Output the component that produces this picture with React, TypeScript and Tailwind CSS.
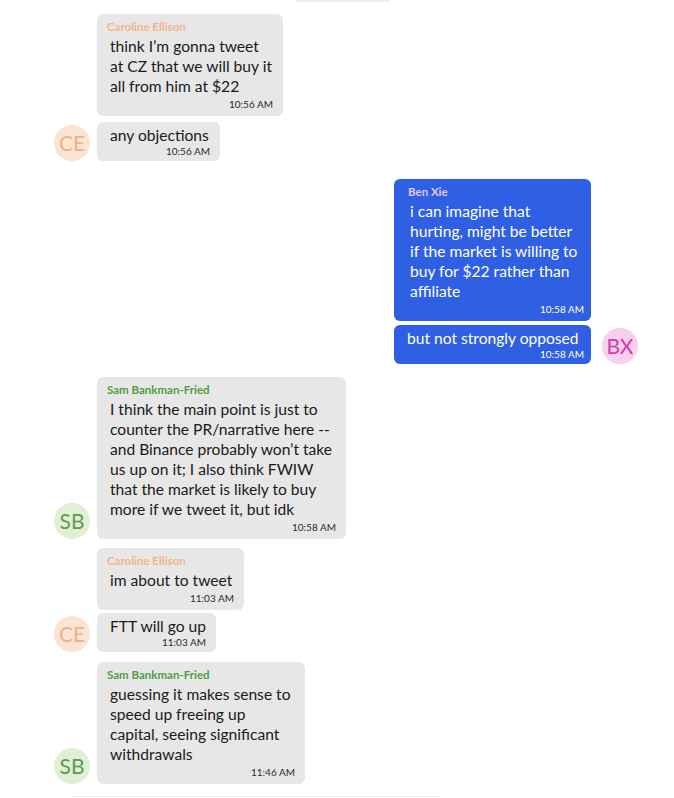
import React from 'react';

type Side = 'left' | 'right';

interface Bubble {
  name?: string;
  lines: string[];
  time: string;
  width: number;
  gapTop: number;
}

interface Group {
  side: Side;
  initials: string;
  nameColor: string;
  avatarBg: string;
  avatarText: string;
  bubbles: Bubble[];
  gapTop: number;
}

const groups: Group[] = [
  {
    side: 'left',
    initials: 'CE',
    nameColor: 'text-[#f2b48c]',
    avatarBg: 'bg-[#fbe4d3]',
    avatarText: 'text-[#efb088]',
    gapTop: 14,
    bubbles: [
      {
        name: 'Caroline Ellison',
        lines: ['think I\u2019m gonna tweet', 'at CZ that we will buy it', 'all from him at $22'],
        time: '10:56 AM',
        width: 186,
        gapTop: 0,
      },
      { lines: ['any objections'], time: '10:56 AM', width: 123, gapTop: 6 },
    ],
  },
  {
    side: 'right',
    initials: 'BX',
    nameColor: 'text-[#e6c6f2]',
    avatarBg: 'bg-[#f7d0ee]',
    avatarText: 'text-[#d43aae]',
    gapTop: 18,
    bubbles: [
      {
        name: 'Ben Xie',
        lines: [
          'i can imagine that',
          'hurting, might be better',
          'if the market is willing to',
          'buy for $22 rather than',
          'affiliate',
        ],
        time: '10:58 AM',
        width: 197,
        gapTop: 0,
      },
      { lines: ['but not strongly opposed'], time: '10:58 AM', width: 197, gapTop: 4 },
    ],
  },
  {
    side: 'left',
    initials: 'SB',
    nameColor: 'text-[#4f9e3f]',
    avatarBg: 'bg-[#dff0d6]',
    avatarText: 'text-[#5f9b4f]',
    gapTop: 13,
    bubbles: [
      {
        name: 'Sam Bankman-Fried',
        lines: [
          'I think the main point is just to',
          'counter the PR/narrative here --',
          'and Binance probably won\u2019t take',
          'us up on it; I also think FWIW',
          'that the market is likely to buy',
          'more if we tweet it, but idk',
        ],
        time: '10:58 AM',
        width: 249,
        gapTop: 0,
      },
    ],
  },
  {
    side: 'left',
    initials: 'CE',
    nameColor: 'text-[#f2b48c]',
    avatarBg: 'bg-[#fbe4d3]',
    avatarText: 'text-[#efb088]',
    gapTop: 9,
    bubbles: [
      { name: 'Caroline Ellison', lines: ['im about to tweet'], time: '11:03 AM', width: 147, gapTop: 0 },
      { lines: ['FTT will go up'], time: '11:03 AM', width: 119, gapTop: 3 },
    ],
  },
  {
    side: 'left',
    initials: 'SB',
    nameColor: 'text-[#4f9e3f]',
    avatarBg: 'bg-[#dff0d6]',
    avatarText: 'text-[#5f9b4f]',
    gapTop: 10,
    bubbles: [
      {
        name: 'Sam Bankman-Fried',
        lines: ['guessing it makes sense to', 'speed up freeing up', 'capital, seeing significant', 'withdrawals'],
        time: '11:46 AM',
        width: 208,
        gapTop: 0,
      },
    ],
  },
];

function Avatar({ g }: { g: Group }) {
  return (
    <div
      className={`w-[36px] h-[36px] shrink-0 rounded-full flex items-center justify-center text-[21px] ${g.avatarBg} ${g.avatarText}`}
    >
      {g.initials}
    </div>
  );
}

function MessageBubble({ b, g }: { b: Bubble; g: Group }) {
  const blue = g.side === 'right';
  return (
    <div
      className={`rounded-[6px] ${blue ? 'bg-[#2f5fe3] text-white' : 'bg-[#e7e7e7] text-[#1a1a1a]'} ${
        b.name ? 'pt-[5px] pb-[5px]' : 'pt-[3px] pb-[4px]'
      }`}
      style={{ width: b.width, marginTop: b.gapTop }}
    >
      {b.name && (
        <div className={`text-[11.5px] font-bold leading-4 mb-[1px] ${blue ? 'pl-[14px]' : 'pl-[10px]'} ${g.nameColor}`}>
          {b.name}
        </div>
      )}
      <div className={`text-[15.6px] leading-5 ${blue && b.name ? 'pl-[16px]' : 'pl-[13px]'}`}>
        {b.lines.map((l, i) => (
          <div key={i} className="whitespace-nowrap">
            {l}
          </div>
        ))}
      </div>
      <div
        className={`text-[10px] text-right ${b.name ? 'leading-[14px] mt-[1px]' : 'leading-3'} ${
          blue ? 'pr-[7px] text-white' : 'pr-[10px] text-[#2a2a2a]'
        }`}
      >
        {b.time}
      </div>
    </div>
  );
}

function MessageGroup({ g }: { g: Group }) {
  const right = g.side === 'right';
  return (
    <div
      className={`flex items-end ${right ? 'flex-row-reverse pr-[36px] gap-[11px]' : 'pl-[54px] gap-[7px]'}`}
      style={{ marginTop: g.gapTop }}
    >
      <Avatar g={g} />
      <div className="flex flex-col">
        {g.bubbles.map((b, i) => (
          <MessageBubble key={i} b={b} g={g} />
        ))}
      </div>
    </div>
  );
}

export default function App() {
  return (
    <div
      className="w-[674px] h-[798px] bg-white overflow-hidden relative"
      style={{ fontFamily: 'Lato, "Open Sans", sans-serif' }}
    >
      <div className="absolute top-0 left-[295px] w-[95px] h-[2px] bg-[#ececec] rounded-b" />
      {groups.map((g, i) => (
        <MessageGroup key={i} g={g} />
      ))}
      <div className="absolute left-[70px] top-[796px] w-[370px] h-px bg-[#f0f0f0]" />
    </div>
  );
}
